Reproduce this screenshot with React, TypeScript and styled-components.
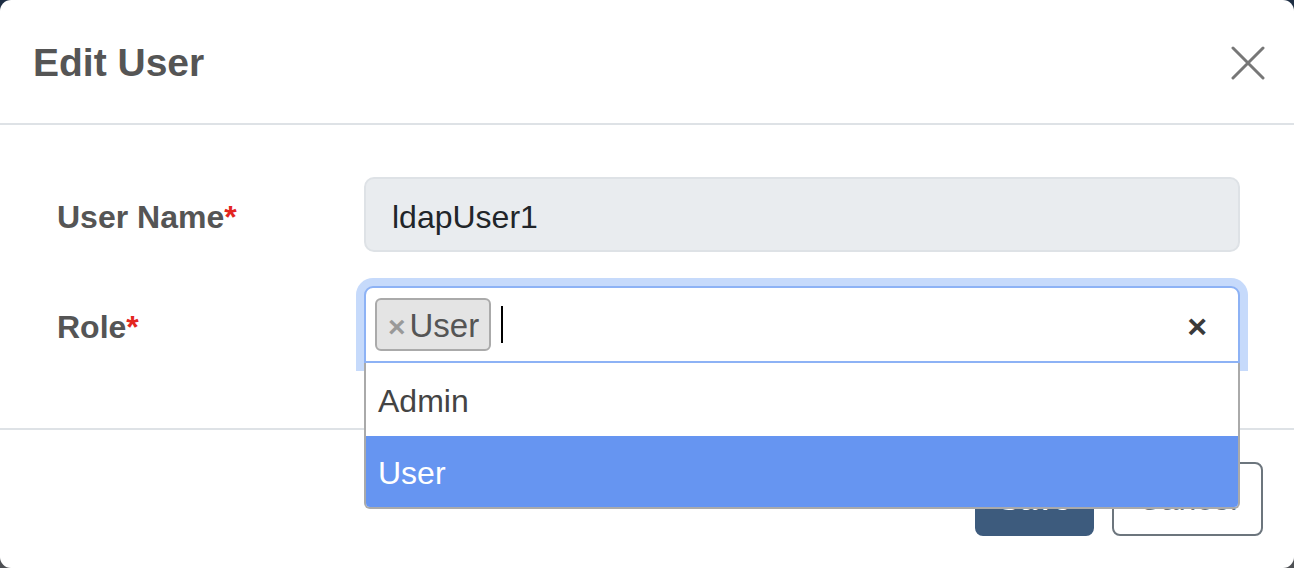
import React from "react";
import styled, { createGlobalStyle } from "styled-components";

const Global = createGlobalStyle`
  html, body { margin: 0; padding: 0; }
  body {
    width: 1294px;
    height: 568px;
    overflow: hidden;
    background: linear-gradient(#1d2d43, #4e5054);
    font-family: "Liberation Sans", Arial, Helvetica, sans-serif;
  }
`;

const Modal = styled.div`
  width: 1294px;
  height: 568px;
  background: #fff;
  border-radius: 11px;
  display: flex;
  flex-direction: column;
  box-sizing: border-box;
`;

const Header = styled.div`
  height: 125px;
  box-sizing: border-box;
  border-bottom: 2px solid #dee2e6;
  display: flex;
  align-items: center;
  justify-content: space-between;
  padding: 2px 29px 0 33px;
`;

const Title = styled.h5`
  margin: 0;
  font-size: 39px;
  font-weight: 700;
  color: #555;
  line-height: 1;
`;

const CloseButton = styled.button`
  border: none;
  background: none;
  padding: 0;
  width: 34px;
  height: 34px;
  display: flex;
  align-items: center;
  justify-content: center;
  cursor: pointer;
`;

const Body = styled.div`
  display: grid;
  grid-template-columns: 307px 1fr;
  row-gap: 34px;
  padding: 52px 54px 65px 57px;
  align-items: center;
`;

const Label = styled.label`
  font-size: 32px;
  font-weight: 700;
  color: #555;
  padding-top: 5px;
`;

const Required = styled.span`
  color: #e3261f;
`;

const ReadOnlyInput = styled.div`
  height: 75px;
  box-sizing: border-box;
  border: 2px solid #dee2e6;
  border-radius: 10px;
  background: #e9ecef;
  display: flex;
  align-items: center;
  padding: 5px 26px 0;
  font-size: 32px;
  color: #212529;
`;

const SelectWrap = styled.div`
  position: relative;
  height: 77px;
`;

const Control = styled.div`
  height: 77px;
  box-sizing: border-box;
  border: 2px solid #8db2f5;
  border-radius: 9px 9px 0 0;
  box-shadow: 0 0 0 8px #c6dafb;
  background: #fff;
  display: flex;
  align-items: center;
  padding: 0 31px 0 9px;
`;

const Chip = styled.span`
  height: 53px;
  box-sizing: border-box;
  border: 2px solid #aaa;
  border-radius: 6px;
  background: #e4e4e4;
  display: inline-flex;
  align-items: center;
  padding: 3px 10px 0 11px;
  font-size: 33px;
  color: #555;
`;

const ChipRemove = styled.span`
  color: #999;
  font-weight: 700;
  font-size: 30px;
  margin-right: 4px;
  margin-top: 1px;
`;

const Cursor = styled.span`
  width: 2px;
  height: 37px;
  background: #000;
  margin-left: 10px;
`;

const Spacer = styled.span`
  flex: 1;
`;

const Clear = styled.span`
  font-size: 34px;
  font-weight: 700;
  color: #3a3a3a;
  line-height: 1;
  margin-top: 2px;
`;

const Dropdown = styled.ul`
  position: absolute;
  top: 100%;
  left: 0;
  right: 0;
  margin: 0;
  padding: 0;
  list-style: none;
  background: #fff;
  border: 2px solid #aaa;
  border-top: none;
  border-radius: 0 0 6px 6px;
  overflow: hidden;
  z-index: 5;
`;

const Option = styled.li<{ $active?: boolean; $h: number }>`
  height: ${(p) => p.$h}px;
  box-sizing: border-box;
  display: flex;
  align-items: center;
  padding: 4px 12px 0;
  font-size: 32px;
  color: ${(p) => (p.$active ? "#fff" : "#444")};
  background: ${(p) => (p.$active ? "#6695f1" : "#fff")};
`;

const Footer = styled.div`
  border-top: 2px solid #dee2e6;
  display: flex;
  justify-content: flex-end;
  gap: 18px;
  padding: 32px 31px 0 0;
`;

const Button = styled.button<{ $primary?: boolean }>`
  height: 74px;
  box-sizing: border-box;
  border-radius: 8px;
  font-family: inherit;
  font-size: 32px;
  padding: 0;
  border: 2px solid ${(p) => (p.$primary ? "#3d5b7d" : "#6c757d")};
  background: ${(p) => (p.$primary ? "#3d5b7d" : "#fff")};
  color: ${(p) => (p.$primary ? "#fff" : "#6c757d")};
  width: ${(p) => (p.$primary ? "119px" : "151px")};
`;

export default function App() {
  return (
    <>
      <Global />
      <Modal>
        <Header>
          <Title>Edit User</Title>
          <CloseButton aria-label="Close">
            <svg width="34" height="34" viewBox="0 0 34 34">
              <path d="M2 2 L32 32 M32 2 L2 32" stroke="#777" strokeWidth="3" strokeLinecap="round" />
            </svg>
          </CloseButton>
        </Header>
        <Body>
          <Label>
            User Name<Required>*</Required>
          </Label>
          <ReadOnlyInput>ldapUser1</ReadOnlyInput>
          <Label>
            Role<Required>*</Required>
          </Label>
          <SelectWrap>
            <Control>
              <Chip>
                <ChipRemove>×</ChipRemove>User
              </Chip>
              <Cursor />
              <Spacer />
              <Clear>×</Clear>
            </Control>
            <Dropdown>
              <Option $h={73}>Admin</Option>
              <Option $h={71} $active>
                User
              </Option>
            </Dropdown>
          </SelectWrap>
        </Body>
        <Footer>
          <Button $primary>Save</Button>
          <Button>Cancel</Button>
        </Footer>
      </Modal>
    </>
  );
}
